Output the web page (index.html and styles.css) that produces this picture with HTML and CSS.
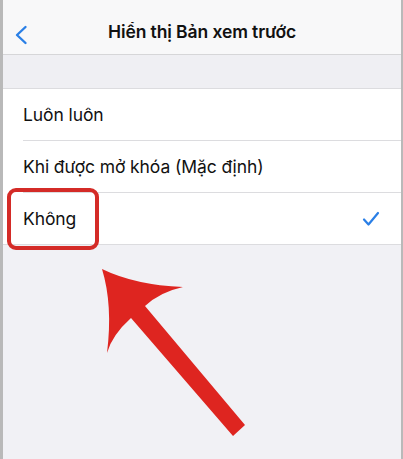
FILE: index.html
```html
<!DOCTYPE html>
<html lang="vi">
<head>
<meta charset="utf-8">
<title>Hiển thị Bản xem trước</title>
<link rel="stylesheet" href="styles.css">
</head>
<body>
<div class="screen">
  <header class="navbar">
    <svg class="back" width="14" height="20" viewBox="0 0 14 20"><path d="M11.5 2 L3 10 L11.5 18" fill="none" stroke="#2a7fe6" stroke-width="2.4" stroke-linecap="round" stroke-linejoin="round"/></svg>
    <h1 class="title">Hiển thị Bản xem trước</h1>
  </header>
  <div class="spacer"></div>
  <ul class="options">
    <li class="option">Luôn luôn</li>
    <li class="option">Khi được mở khóa (Mặc định)</li>
    <li class="option selected">Không
      <svg class="check" width="18" height="16" viewBox="0 0 18 16"><path d="M2 8.5 L6.5 13.5 L16 2" fill="none" stroke="#2a7fe6" stroke-width="2.2" stroke-linecap="round" stroke-linejoin="round"/></svg>
    </li>
  </ul>
  <div class="highlight"></div>
  <svg class="pointer" width="403" height="459" viewBox="0 0 403 459">
    <path d="M102 269 Q135 285 183 287 Q160 292 145 306 L245 425 L233 436 L131 318 Q112 335 107 353 Q113 305 102 269 Z" fill="#de2520"/>
  </svg>
</div>
</body>
</html>
```

FILE: styles.css
```css
html, body {
  margin: 0;
  padding: 0;
}
body {
  width: 403px;
  height: 459px;
  overflow: hidden;
  font-family: Inter, "Liberation Sans", sans-serif;
  color: #111;
}
.screen {
  position: relative;
  box-sizing: border-box;
  height: 459px;
  border-left: 3px solid #b9b9b9;
  border-right: 2px solid #b9b9b9;
  background: #f1f1f5;
}
.navbar {
  height: 54px;
  background: #f8f8f9;
  border-bottom: 1px solid #d6d6d8;
  display: flex;
  align-items: center;
  justify-content: center;
  position: relative;
}
.back {
  position: absolute;
  left: 11px;
  top: 25px;
}
.title {
  margin: 0;
  font-size: 17.5px;
  font-weight: 600;
  letter-spacing: -0.1px;
  padding-top: 8px;
}
.spacer {
  height: 33px;
  background: #efeff3;
  border-bottom: 1px solid #dcdcdf;
}
.options {
  list-style: none;
  margin: 0;
  padding: 0 0 0 20px;
  background: #fff;
  border-bottom: 1px solid #dcdcdf;
}
.option {
  height: 51px;
  display: flex;
  align-items: center;
  font-size: 17.5px;
  letter-spacing: -0.1px;
  border-bottom: 1px solid #dcdcdf;
  padding-right: 21px;
}
.option:last-child {
  border-bottom: none;
}
.selected {
  justify-content: space-between;
}
.highlight {
  position: absolute;
  left: 4px;
  top: 188px;
  width: 84px;
  height: 54px;
  border: 4px solid #d42b27;
  border-radius: 9px;
}
.pointer {
  position: absolute;
  left: -3px;
  top: 0;
}
```
